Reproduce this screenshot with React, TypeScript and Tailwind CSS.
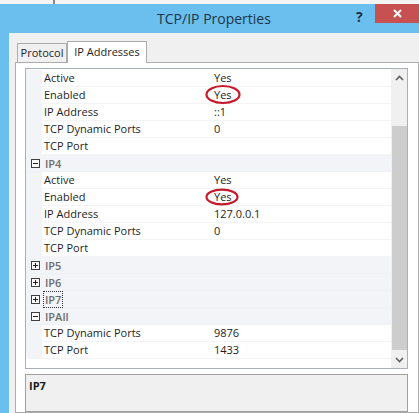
import React from "react";

type Row =
  | { kind: "prop"; name: string; value?: string; circled?: "a" | "b" }
  | { kind: "cat"; name: string; open: boolean; focus?: boolean };

const rows: Row[] = [
  { kind: "prop", name: "Active", value: "Yes" },
  { kind: "prop", name: "Enabled", value: "Yes", circled: "a" },
  { kind: "prop", name: "IP Address", value: "::1" },
  { kind: "prop", name: "TCP Dynamic Ports", value: "0" },
  { kind: "prop", name: "TCP Port" },
  { kind: "cat", name: "IP4", open: true },
  { kind: "prop", name: "Active", value: "Yes" },
  { kind: "prop", name: "Enabled", value: "Yes", circled: "b" },
  { kind: "prop", name: "IP Address", value: "127.0.0.1" },
  { kind: "prop", name: "TCP Dynamic Ports", value: "0" },
  { kind: "prop", name: "TCP Port" },
  { kind: "cat", name: "IP5", open: false },
  { kind: "cat", name: "IP6", open: false },
  { kind: "cat", name: "IP7", open: false, focus: true },
  { kind: "cat", name: "IPAll", open: true },
  { kind: "prop", name: "TCP Dynamic Ports", value: "9876" },
  { kind: "prop", name: "TCP Port", value: "1433" },
];

const ExpandBox = ({ open }: { open: boolean }) => (
  <svg width="9" height="9" viewBox="0 0 9 9" className="block">
    <rect x="0.5" y="0.5" width="8" height="8" fill="white" stroke="#404040" />
    <line x1="2" y1="4.5" x2="7" y2="4.5" stroke="#202020" />
    {!open && <line x1="4.5" y1="2" x2="4.5" y2="7" stroke="#202020" />}
  </svg>
);

const Circle = ({ variant }: { variant: "a" | "b" }) =>
  variant === "a" ? (
    <svg width="36" height="21" viewBox="0 0 36 21" className="absolute left-[-9px] top-[-3px]">
      <ellipse cx="18" cy="10.5" rx="16.5" ry="8.5" fill="none" stroke="#c41a2c" strokeWidth="2.2" />
    </svg>
  ) : (
    <svg width="34" height="18" viewBox="0 0 34 18" className="absolute left-[-9px] top-[-1px]">
      <ellipse cx="17" cy="9" rx="15.5" ry="7.3" fill="none" stroke="#c41a2c" strokeWidth="2.2" />
    </svg>
  );

const GridRow = ({ row }: { row: Row }) => {
  if (row.kind === "cat") {
    return (
      <div className="flex h-[17px] items-center bg-[#f2f4f8] border-b border-[#eef1f6]">
        <div className="flex w-[16px] justify-center pl-[2px]">
          <ExpandBox open={row.open} />
        </div>
        <span
          className={`ml-[1px] px-[1px] font-semibold leading-[15px] text-[#6d6d6d] ${
            row.focus ? "border border-dotted border-[#333]" : "border border-transparent"
          }`}
        >
          {row.name}
        </span>
      </div>
    );
  }
  return (
    <div className="flex h-[17px] items-center">
      <div className="h-full w-[16px] bg-[#f2f4f8]" />
      <div className="flex h-full w-[170px] items-center border-b border-[#f3f4f6] pl-[2px] text-[#1e1e1e]">
        {row.name}
      </div>
      <div className="relative flex h-full flex-1 items-center border-b border-[#f3f4f6] pl-[2px] text-[#1e1e1e]">
        {row.value && (
          <span className="relative">
            {row.circled && <Circle variant={row.circled} />}
            {row.value}
          </span>
        )}
      </div>
    </div>
  );
};

const Scrollbar = () => (
  <div className="flex w-[16px] flex-col bg-[#f0f0f0]">
    <div className="flex h-[17px] items-center justify-center">
      <svg width="9" height="6" viewBox="0 0 9 6">
        <path d="M1 5 L4.5 1.5 L8 5" fill="none" stroke="#606060" strokeWidth="1.6" />
      </svg>
    </div>
    <div className="h-[40px]" />
    <div className="mx-auto h-[224px] w-[15px] bg-[#cdcdcd]" />
    <div className="flex-1" />
    <div className="flex h-[17px] items-center justify-center">
      <svg width="9" height="6" viewBox="0 0 9 6">
        <path d="M1 1 L4.5 4.5 L8 1" fill="none" stroke="#606060" strokeWidth="1.6" />
      </svg>
    </div>
  </div>
);

export default function App() {
  return (
    <div className="relative h-[413px] w-[419px] overflow-hidden bg-[#f4f4f4] text-[11px] font-['Open_Sans',sans-serif]">
      <div className="flex h-[4px]">
        <div className="ml-[53px] h-full w-[2px] bg-[#8a8a8a]" />
      </div>
      <div className="flex h-[409px] flex-col bg-[#6bbfee] pl-[9px]">
        <div className="relative flex h-[29px] items-center justify-center">
          <span className="text-[14px] text-[#1d3448]">TCP/IP Properties</span>
          <span className="absolute left-[347px] top-[2px] text-[14px] font-bold text-[#1e2f3e]">?</span>
          <div className="absolute right-0 top-0 flex h-[19px] w-[44px] items-center justify-center bg-[#c75050]">
            <svg width="9" height="9" viewBox="0 0 9 9">
              <path d="M1 1 L8 8 M8 1 L1 8" stroke="white" strokeWidth="2" />
            </svg>
          </div>
        </div>
        <div className="flex flex-1 flex-col bg-[#f0f0f0] pl-[6px] pt-[8px]">
          <div className="flex h-[21px] items-end">
            <div className="ml-[2px] flex h-[19px] w-[50px] items-center justify-center border border-b-0 border-[#acacac] bg-[#f0f0f0] text-[#1e1e1e]">
              Protocol
            </div>
            <div className="relative z-10 mb-[-1px] flex h-[22px] w-[80px] items-center justify-center border border-b-0 border-[#acacac] bg-white pb-[1px] text-[#1e1e1e]">
              IP Addresses
            </div>
          </div>
          <div className="flex flex-1 flex-col border border-[#acacac] bg-white pl-[9px] pt-[5px] pr-[10px]">
            <div className="flex h-[301px] border border-[#a9b0ba] bg-white">
              <div className="flex-1 pt-[1px]">
                {rows.map((r, i) => (
                  <GridRow key={i} row={r} />
                ))}
              </div>
              <Scrollbar />
            </div>
            <div className="mt-[5px] flex-1 border border-[#a0a0a0] bg-[#f0f0f0] px-[3px] pt-[3px]">
              <span className="font-bold text-[#1a1a1a]">IP7</span>
            </div>
          </div>
        </div>
      </div>
    </div>
  );
}
